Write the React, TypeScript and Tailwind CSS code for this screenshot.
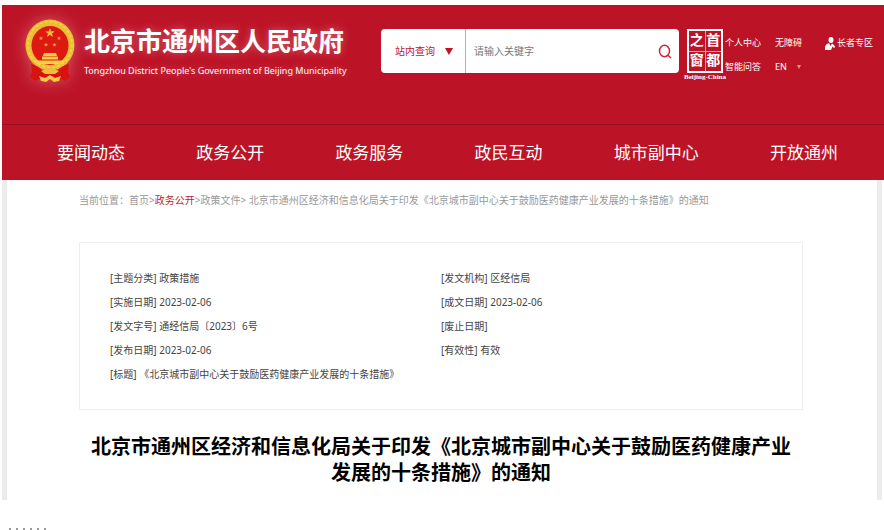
import React from "react";

const navItems = ["要闻动态", "政务公开", "政务服务", "政民互动", "城市副中心", "开放通州"];

const metaRows: [string, string, string, string][] = [
  ["[主题分类]", "政策措施", "[发文机构]", "区经信局"],
  ["[实施日期]", "2023-02-06", "[成文日期]", "2023-02-06"],
  ["[发文字号]", "通经信局〔2023〕6号", "[废止日期]", ""],
  ["[发布日期]", "2023-02-06", "[有效性]", "有效"],
];

function Emblem() {
  return (
    <svg viewBox="0 0 50 66" className="h-[66px] w-[50px] shrink-0 drop-shadow-[0_0_8px_rgba(255,200,200,0.4)]" aria-hidden="true">
      <ellipse cx="25" cy="26" rx="24.500" ry="25.500" fill="#edbd33" />
      <ellipse cx="25" cy="25.500" rx="22" ry="23" fill="none" stroke="#f7d452" strokeWidth="1.500" strokeDasharray="3 2" />
      <ellipse cx="25" cy="26.500" rx="18.500" ry="19.500" fill="#dd1a12" />
      <path d="M25 9l1.300 3.200 3.500.2-2.700 2.200.9 3.300-3-1.800-3 1.800.9-3.300-2.700-2.200 3.500-.2z" fill="#f6b53a" />
      <g fill="#f0953a">
        <path d="M16 17l.6 1.400 1.600.1-1.200 1 .4 1.500-1.400-.8-1.400.8.4-1.500-1.200-1 1.600-.1z" />
        <path d="M34 17l.6 1.400 1.600.1-1.200 1 .4 1.500-1.400-.8-1.400.8.4-1.500-1.200-1 1.600-.1z" />
        <path d="M21 23.500l.6 1.400 1.600.1-1.200 1 .4 1.500-1.400-.8-1.400.8.4-1.500-1.200-1 1.600-.1z" />
        <path d="M29.500 23.500l.6 1.400 1.600.1-1.200 1 .4 1.500-1.400-.8-1.400.8.4-1.500-1.200-1 1.600-.1z" />
      </g>
      <path d="M19 34h12l1 3H18zM17 37.500h16v3H17zM10 41.500h30l-2 3.500H12z" fill="#f8cf45" />
      <path d="M6 45q8 2 12 7l7-3 7 3q4-5 12-7l-1 8 2 5-5 4-4-2-5 3-6-3-6 3-5-3-4 2-5-4 2-5z" fill="#d8130f" />
      <path d="M16 52l5-2q4-2 8 0l5 2-4 3h-10z" fill="#f3bd34" />
      <path d="M14 57l6 2 5-3 5 3 6-2-2 5-5 1-4-3-4 3-5-1z" fill="#f8c74a" />
    </svg>
  );
}

function CapitalWindow() {
  return (
    <a href="#" aria-label="首都之窗" className="flex w-10 shrink-0 flex-col items-center text-white">
      <span className="grid h-11 w-9 grid-cols-2 grid-rows-2 gap-px border-2 border-white bg-white/60 font-['Liberation_Serif','Noto_Sans_CJK_SC',serif] text-sm leading-5 font-bold">
        {["之", "首", "窗", "都"].map((c) => (
          <span key={c} className="flex items-center justify-center overflow-hidden bg-[#bd1327]">{c}</span>
        ))}
      </span>
      <span className="font-['Liberation_Serif',serif] text-[7px] leading-2 font-bold whitespace-nowrap">Beijing-China</span>
    </a>
  );
}

function SearchBar() {
  return (
    <form className="flex h-11 min-w-0 flex-1 overflow-hidden rounded bg-white" onSubmit={(e) => e.preventDefault()}>
      <div className="relative flex w-[85px] shrink-0 items-center border-r border-r-[#e59aa2]">
        <select aria-label="查询范围" className="h-full w-full appearance-none bg-transparent pl-3.5 text-[10px] text-[#bd1327] outline-none">
          <option>站内查询</option>
        </select>
        <svg viewBox="0 0 8 7" className="pointer-events-none absolute right-3 h-[7px] w-2" aria-hidden="true">
          <path d="M0 0h8L4 7z" fill="#bd1327" />
        </svg>
      </div>
      <input aria-label="关键字" placeholder="请输入关键字" className="min-w-0 flex-1 px-2 text-[10px] text-[#555] outline-none placeholder:text-[#777]" />
      <button aria-label="搜索" className="flex w-7 items-center justify-center">
        <svg viewBox="0 0 14 15" className="h-[15px] w-3.5" fill="none" stroke="#c8283a" strokeWidth="1.500" aria-hidden="true">
          <ellipse cx="6.500" cy="7" rx="5" ry="5.700" />
          <path d="M9.500 11l3.500 3" />
        </svg>
      </button>
    </form>
  );
}

function QuickLinks() {
  return (
    <div className="grid shrink-0 grid-cols-[50px_50px_49px] gap-y-2 text-[9px] leading-4 whitespace-nowrap text-white">
      <a href="#">个人中心</a>
      <a href="#">无障碍</a>
      <a href="#" className="flex items-center gap-0.5">
        <svg viewBox="0 0 10 13" className="h-[13px] w-2.5 shrink-0" fill="#fff" aria-hidden="true">
          <ellipse cx="6" cy="3" rx="2.500" ry="3" />
          <path d="M0 13V9.500Q1 6.500 4 6l1.500 3L7 6.500q2.500 1 3 3.500l-1 1-1.500-1.500L6 13z" />
        </svg>
        长者专区
      </a>
      <a href="#">智能问答</a>
      <button className="flex items-center gap-2.5 text-left font-['Noto_Sans',sans-serif]">
        EN
        <svg viewBox="0 0 4 4" className="size-1" aria-hidden="true">
          <path d="M0 0h4L2 4z" fill="#e3a070" />
        </svg>
      </button>
    </div>
  );
}

export default function App() {
  return (
    <div className="h-screen overflow-hidden bg-white pt-[5px] pl-0.5 font-['Noto_Sans','Noto_Sans_CJK_SC',sans-serif]">
      <header className="bg-[#bd1327]">
        <div className="flex h-[119px] items-start pt-3.5 pl-[23px]">
          <Emblem />
          <div className="ml-[9px] w-[297px] shrink-0 whitespace-nowrap text-white">
            <div className="mt-1 text-[26px] leading-9 font-bold [text-shadow:0_0_8px_rgba(255,255,255,0.35)]">北京市通州区人民政府</div>
            <div className="text-[9px] leading-6 [text-shadow:0_0_8px_rgba(255,255,255,0.35)]">
              Tongzhou District People's Government of Beijing Municipality
            </div>
          </div>
          <div className="mt-2.5 flex min-w-0 flex-1 items-start">
            <SearchBar />
            <div className="ml-1.5">
              <CapitalWindow />
            </div>
            <div className="mt-1.5 mr-2.5">
              <QuickLinks />
            </div>
          </div>
        </div>
        <nav aria-label="主导航" className="flex h-14 items-center justify-between border-t border-[#98101f] pr-[46px] pl-[55px] text-[17px] text-white">
          {navItems.map((item) => (
            <a key={item} href="#">{item}</a>
          ))}
        </nav>
      </header>
      <main className="mr-0.5 h-80 border-x-5 border-[#ececec] pr-[74px] pl-[72px]">
        <nav aria-label="当前位置" className="pt-2.5 text-[10px] leading-5 whitespace-nowrap text-[#999]">
          当前位置：<a href="#">首页</a>&gt;<a href="#" className="text-[#c01c30]">政务公开</a>&gt;<a href="#">政策文件</a>&gt; 北京市通州区经济和信息化局关于印发《北京城市副中心关于鼓励医药健康产业发展的十条措施》的通知
        </nav>
        <table className="mt-8 block h-[168px] w-full border border-[#eee] px-[30px] pt-[23px] text-[10px] leading-6 text-[#444]">
          <tbody className="block">
            {metaRows.map(([a, b, c, d]) => (
              <tr key={a} className="grid grid-cols-2">
                <td>{a} {b}</td>
                <td>{c} {d}</td>
              </tr>
            ))}
            <tr className="block">
              <td className="block">[标题] 《北京城市副中心关于鼓励医药健康产业发展的十条措施》</td>
            </tr>
          </tbody>
        </table>
        <h1 className="mt-6 text-center text-[20px] leading-[26px] font-bold text-black">
          北京市通州区经济和信息化局关于印发《北京城市副中心关于鼓励医药健康产业<br />发展的十条措施》的通知
        </h1>
      </main>
      <div className="mt-7 flex gap-[5px] pl-[7px]" aria-hidden="true">
        {[0, 1, 2, 3, 4, 5].map((n) => (
          <span key={n} className="h-0.5 w-0.5 bg-[#999]" />
        ))}
      </div>
    </div>
  );
}
